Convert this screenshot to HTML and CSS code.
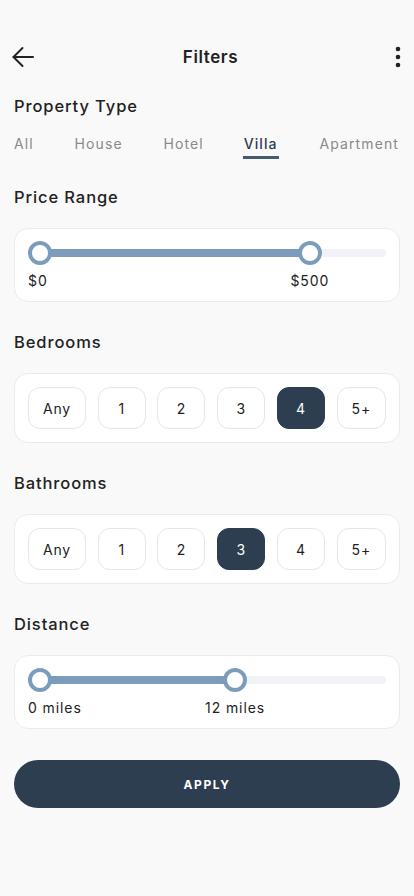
FILE: index.html
```html
<!DOCTYPE html>
<html lang="en">
<head>
<meta charset="utf-8">
<meta name="viewport" content="width=device-width, initial-scale=1">
<title>Filters</title>
<link rel="stylesheet" href="styles.css">
</head>
<body>
<div class="screen">
  <header class="topbar">
    <button class="icon-btn" aria-label="Back">
      <svg width="24" height="24" viewBox="0 0 24 24" fill="none" stroke="#222" stroke-width="2" stroke-linecap="round" stroke-linejoin="round">
        <path d="M22 12H2.5"/>
        <path d="M11.5 3L2.5 12l9 9"/>
      </svg>
    </button>
    <h1 class="title">Filters</h1>
    <button class="icon-btn more" aria-label="More">
      <svg width="6" height="22" viewBox="0 0 6 22" fill="#222">
        <circle cx="3" cy="3" r="2.3"/>
        <circle cx="3" cy="11" r="2.3"/>
        <circle cx="3" cy="19" r="2.3"/>
      </svg>
    </button>
  </header>

  <section class="section section-first">
    <h2 class="label">Property Type</h2>
    <nav class="tabs">
      <span class="tab">All</span>
      <span class="tab">House</span>
      <span class="tab">Hotel</span>
      <span class="tab active">Villa</span>
      <span class="tab">Apartment</span>
    </nav>
  </section>

  <section class="section section-price">
    <h2 class="label">Price Range</h2>
    <div class="card slider-card">
      <div class="slider">
        <div class="track"></div>
        <div class="fill" style="width: 80.8%"></div>
        <span class="thumb" style="left: 0%"></span>
        <span class="thumb" style="left: 80.8%"></span>
      </div>
      <div class="slider-labels">
        <span class="min">$0</span>
        <span class="max" style="left: 80.8%">$500</span>
      </div>
    </div>
  </section>

  <section class="section">
    <h2 class="label">Bedrooms</h2>
    <div class="card chips">
      <button class="chip any">Any</button>
      <button class="chip">1</button>
      <button class="chip">2</button>
      <button class="chip">3</button>
      <button class="chip selected">4</button>
      <button class="chip">5+</button>
    </div>
  </section>

  <section class="section">
    <h2 class="label">Bathrooms</h2>
    <div class="card chips">
      <button class="chip any">Any</button>
      <button class="chip">1</button>
      <button class="chip">2</button>
      <button class="chip selected">3</button>
      <button class="chip">4</button>
      <button class="chip">5+</button>
    </div>
  </section>

  <section class="section">
    <h2 class="label">Distance</h2>
    <div class="card slider-card">
      <div class="slider">
        <div class="track"></div>
        <div class="fill" style="width: 58.4%"></div>
        <span class="thumb" style="left: 0%"></span>
        <span class="thumb" style="left: 58.4%"></span>
      </div>
      <div class="slider-labels">
        <span class="min">0 miles</span>
        <span class="max" style="left: 58.4%">12 miles</span>
      </div>
    </div>
  </section>

  <button class="apply">APPLY</button>
</div>
</body>
</html>
```

FILE: styles.css
```css
* {
  box-sizing: border-box;
}

html, body {
  margin: 0;
  padding: 0;
}

body {
  background: #f9f9f9;
  font-family: Inter, "Noto Sans", sans-serif;
  color: #222;
}

.screen {
  width: 414px;
  min-height: 896px;
  padding: 34px 14px 0;
}

/* Top bar */
.topbar {
  height: 46px;
  display: flex;
  align-items: center;
  justify-content: space-between;
}

.icon-btn {
  background: none;
  border: 0;
  padding: 0;
  width: 24px;
  height: 24px;
  display: flex;
  align-items: center;
  justify-content: center;
  margin-left: -3px;
}

.icon-btn.more {
  margin-left: 0;
  margin-right: -10px;
  width: 24px;
}

.title {
  margin: 0;
  font-size: 17px;
  font-weight: 600;
  letter-spacing: 0.6px;
  color: #222;
}

/* Sections */
.section {
  margin-top: 29px;
}

.section-first {
  margin-top: 15px;
}

.section-price {
  margin-top: 27px;
}

.label {
  margin: 0 0 20px;
  font-size: 16.5px;
  line-height: 22px;
  font-weight: 500;
  letter-spacing: 0.9px;
  color: #222;
}

/* Property type tabs */
.section-first .label {
  margin-bottom: 18px;
}

.tabs {
  display: flex;
  justify-content: space-between;
  margin-right: 1px;
}

.tab {
  font-size: 14px;
  line-height: 18px;
  letter-spacing: 1.1px;
  color: #8a8a8a;
  padding-bottom: 3px;
  border-bottom: 3px solid transparent;
}

.tab.active {
  color: #2c3e50;
  font-weight: 500;
  border-bottom-color: #4a5a6d;
  margin-left: -2px;
  padding: 0 1px 3px;
}

/* Cards */
.card {
  background: #fff;
  border: 1px solid #ebebeb;
  border-radius: 14px;
}

.slider-card {
  padding: 12px 13px 11px;
}

.slider {
  position: relative;
  height: 24px;
  margin: 0 12px;
}

.track {
  position: absolute;
  left: 0;
  right: -12px;
  top: 8px;
  height: 8px;
  border-radius: 4px;
  background: #f0f2f8;
}

.fill {
  position: absolute;
  left: 0;
  top: 8px;
  height: 8px;
  background: #7b9cba;
}

.thumb {
  position: absolute;
  top: 0;
  width: 24px;
  height: 24px;
  margin-left: -12px;
  border-radius: 50%;
  background: #fff;
  border: 4.5px solid #7b9cba;
}

.slider-labels {
  position: relative;
  height: 18px;
  margin: 7px 12px 0;
  font-size: 14px;
  line-height: 18px;
  letter-spacing: 0.9px;
  color: #222;
}

.slider-labels .min {
  margin-left: -12px;
}

.slider-labels .max {
  position: absolute;
  top: 0;
  transform: translateX(-50%);
  white-space: nowrap;
}

/* Chip rows */
.chips {
  display: flex;
  justify-content: space-between;
  padding: 13px 13px;
}

.chip {
  height: 42px;
  min-width: 48px;
  padding: 0 14px;
  border: 1px solid #e6e6e6;
  border-radius: 12px;
  background: #fff;
  font-family: Inter, "Noto Sans", sans-serif;
  font-size: 14px;
  letter-spacing: 0.8px;
  color: #222;
}

.chip.any {
  min-width: 57px;
}

.chip.selected {
  background: #2c3e50;
  border-color: #2c3e50;
  color: #fff;
}

/* Apply */
.apply {
  display: block;
  width: 100%;
  height: 48px;
  margin-top: 31px;
  border: 0;
  border-radius: 24px;
  background: #2c3e50;
  color: #fff;
  font-family: Inter, "Noto Sans", sans-serif;
  font-size: 12px;
  font-weight: 700;
  letter-spacing: 1.6px;
}
```
